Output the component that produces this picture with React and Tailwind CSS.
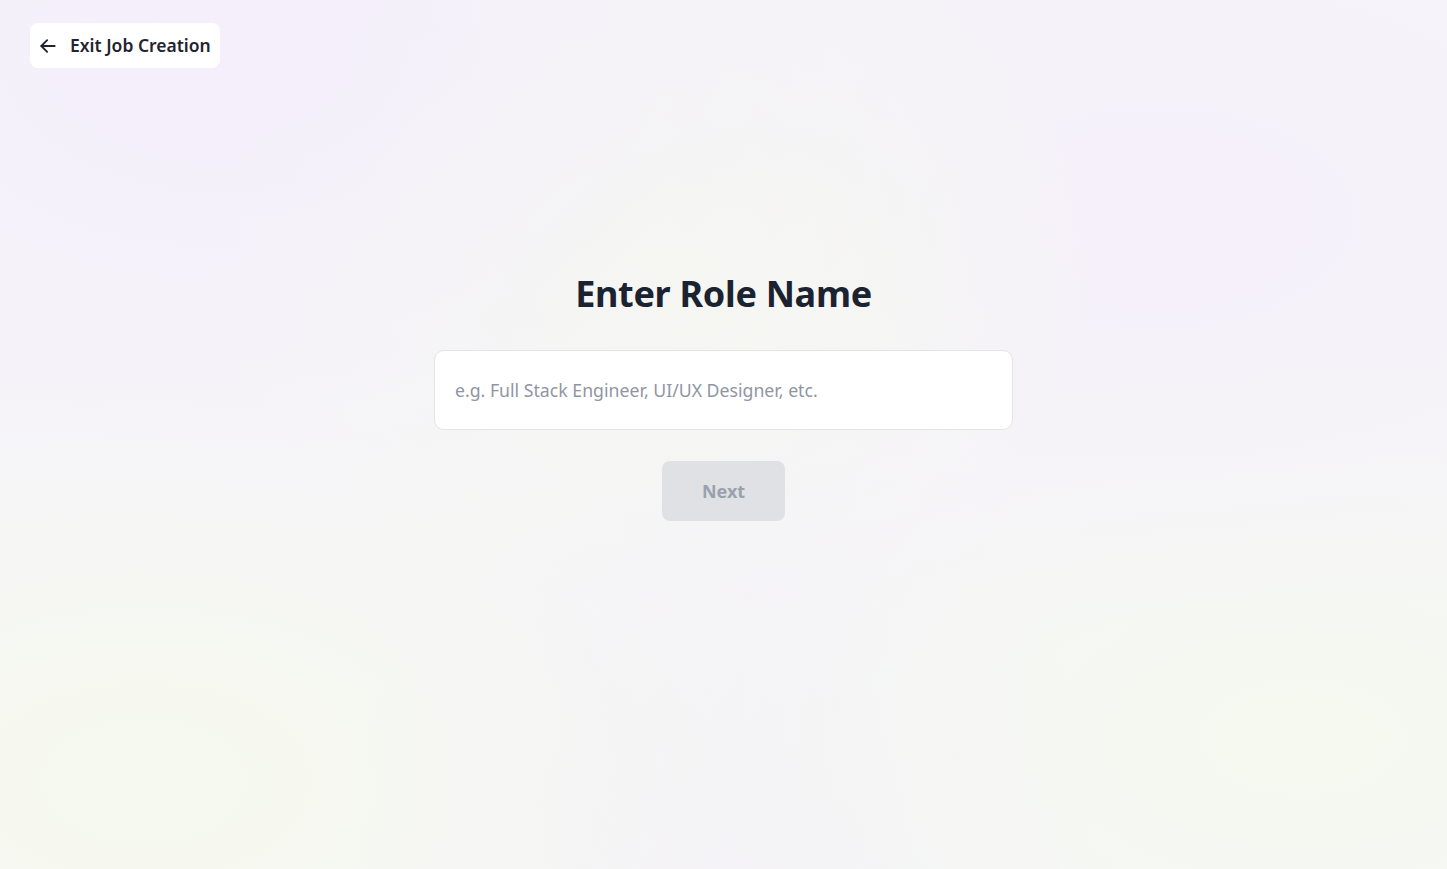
import React from "react";

export default function App() {
  return (
    <div
      className="relative w-full min-h-[869px] flex flex-col bg-[#f6f5f9] bg-[radial-gradient(ellipse_at_15%_5%,#f4effb_0%,transparent_45%),radial-gradient(ellipse_at_45%_30%,#f6f9ee_0%,transparent_40%),radial-gradient(ellipse_at_80%_25%,#f5f0fa_0%,transparent_45%),radial-gradient(ellipse_at_10%_90%,#f6f9ee_0%,transparent_40%),radial-gradient(ellipse_at_90%_85%,#f5f9ef_0%,transparent_40%),radial-gradient(ellipse_at_50%_95%,#f4f0fa_0%,transparent_40%)]"
      style={{ fontFamily: '"Noto Sans", "Open Sans", sans-serif' }}
    >
      <div className="pt-[23px] pl-[30px]">
        <button className="flex items-center gap-[12px] h-[45px] w-[190px] pl-[8px] bg-white rounded-[8px] text-[#1f2430]">
          <svg width="20" height="20" viewBox="0 0 24 24" fill="none" stroke="#1f2430" strokeWidth="2.2" strokeLinecap="round" strokeLinejoin="round">
            <path d="M20 12H4" />
            <path d="M11 19l-7-7 7-7" />
          </svg>
          <span className="text-[17.5px] font-semibold tracking-[0px]">Exit Job Creation</span>
        </button>
      </div>
      <div className="flex flex-col items-center pt-[204px]">
        <h1 className="text-[36px] leading-[44px] font-bold text-[#1b2330] tracking-[-0.3px]">Enter Role Name</h1>
        <div className="mt-[34px] w-[579px] h-[80px] bg-white border border-[#e3e4e8] rounded-[10px] flex items-center px-[20px]">
          <input
            className="w-full outline-none text-[17.7px] text-[#1f2430] placeholder:text-[#8f96a3] bg-transparent"
            placeholder="e.g. Full Stack Engineer, UI/UX Designer, etc."
          />
        </div>
        <button className="mt-[31px] w-[123px] h-[60px] rounded-[8px] bg-[#dfe1e5] text-[#9aa1ad] text-[18px] font-bold">
          Next
        </button>
      </div>
    </div>
  );
}
